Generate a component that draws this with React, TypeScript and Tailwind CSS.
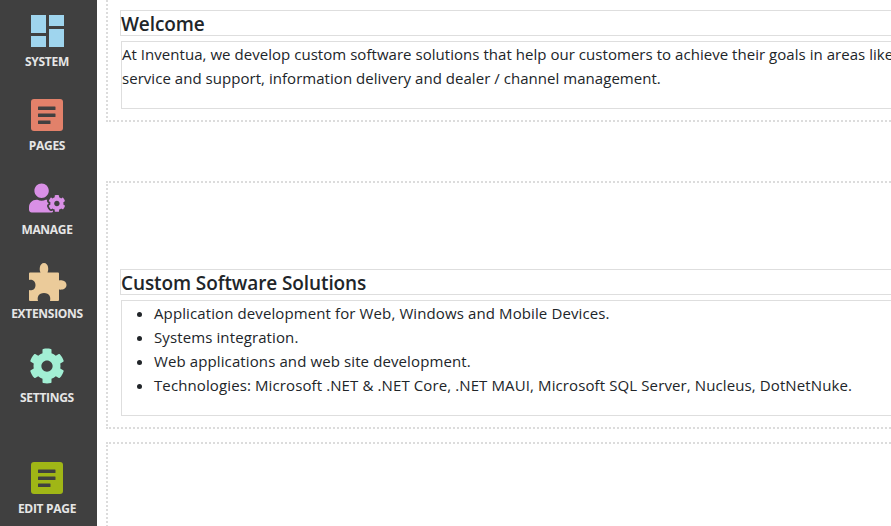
import { FaCog, FaUserCog } from "react-icons/fa";

const labelClass =
  "text-[12px] leading-[16px] font-bold text-[#e6e6e6] tracking-[-0.3px] whitespace-nowrap";

const SystemIcon = () => (
  <svg width="33" height="32" viewBox="0 0 33 32" fill="#9fd5ee">
    <rect x="0" y="0" width="15" height="18" />
    <rect x="18" y="0" width="15" height="11" />
    <rect x="0" y="21" width="15" height="11" />
    <rect x="18" y="14" width="15" height="18" />
  </svg>
);

const PageIcon = ({ color }: { color: string }) => (
  <svg width="32" height="32" viewBox="0 0 32 32">
    <rect width="32" height="32" rx="3" fill={color} />
    <rect x="7" y="7.5" width="17.500" height="3.500" rx="0.5" fill="#404040" />
    <rect x="7" y="14.500" width="17.500" height="3.500" rx="0.5" fill="#404040" />
    <rect x="7" y="21.500" width="12.500" height="3.500" rx="0.5" fill="#404040" />
  </svg>
);

const PuzzleIcon = () => (
  <svg width="38" height="38" viewBox="0 0 38 38" fill="#ebcb9a">
    <path d="M1 9.500H11.500C10 7 10.500 0 15 0S20 7 18.500 9.500H29a1 1 0 0 1 1 1V17.500C32 17 37.500 17.500 37.500 22S32 27 30 26.500V37a1 1 0 0 1-1 1H21C22 34 20.500 30 15 30S8 34 9 38H1a1 1 0 0 1-1-1V27C2 28 6.500 27 6.500 22S2 16 0 17V10.500a1 1 0 0 1 1-1z" />
  </svg>
);

const navItems = [
  { label: "SYSTEM", icon: <SystemIcon />, iconBox: "h-[32px] mt-[15px] mb-[7px]" },
  { label: "PAGES", icon: <PageIcon color="#e2816a" />, iconBox: "h-[32px] mt-[15px] mb-[7px]" },
  { label: "MANAGE", icon: <FaUserCog size={36} color="#d990e6" />, iconBox: "h-[36px] mt-[12px] mb-[6px]" },
  { label: "EXTENSIONS", icon: <PuzzleIcon />, iconBox: "h-[38px] mt-[11px] mb-[5px] ml-[2px]" },
  { label: "SETTINGS", icon: <FaCog size={36} color="#a2efd4" />, iconBox: "h-[36px] mt-[12px] mb-[6px]" },
];

export default function App() {
  return (
    <div
      className="flex h-[526px] w-[891px] overflow-hidden bg-white text-[#212529]"
      style={{ fontFamily: '"Open Sans", "Noto Sans", sans-serif' }}
    >
      <aside className="flex h-full w-[97px] shrink-0 flex-col bg-[#404040] pr-[3px]">
        {navItems.map((item) => (
          <div key={item.label} className="flex h-[84px] flex-col items-center">
            <div className={item.iconBox}>{item.icon}</div>
            <span className={labelClass}>{item.label}</span>
          </div>
        ))}
        <div className="mt-auto flex flex-col items-center pb-[9px]">
          <div className="mb-[7px] h-[32px]">
            <PageIcon color="#a0b616" />
          </div>
          <span className={labelClass}>EDIT PAGE</span>
        </div>
      </aside>

      <main className="min-w-0 flex-1 overflow-hidden pl-[9px]">
        <div className="w-[1000px]">
          <section className="h-[122px] border-b-2 border-l-2 border-dotted border-[#dcdcdc] pl-[12px] pt-[10px]">
            <h2 className="h-[26px] border border-[#dedede] text-[19px] leading-[26px] font-semibold tracking-[-0.1px]">
              Welcome
            </h2>
            <div className="ml-[1px] mt-[5px] h-[68px] border border-[#dedede] text-[15px] leading-[24px] tracking-[0.04px]">
              <p className="whitespace-nowrap">
                At Inventua, we develop custom software solutions that help our customers to achieve their goals in areas like
                <br />
                service and support, information delivery and dealer / channel management.
              </p>
            </div>
          </section>

          <section className="mt-[59px] h-[248px] border-y-2 border-l-2 border-dotted border-[#dcdcdc] pl-[12px] pt-[86px]">
            <h2 className="h-[26px] border border-[#dedede] text-[19px] leading-[26px] font-semibold tracking-[-0.1px]">
              Custom Software Solutions
            </h2>
            <div className="ml-[1px] mt-[5px] h-[116px] border border-[#dedede] text-[15px] leading-[24px] tracking-[0.11px]">
              <ul className="list-disc pl-[32px]">
                <li>Application development for Web, Windows and Mobile Devices.</li>
                <li>Systems integration.</li>
                <li>Web applications and web site development.</li>
                <li>Technologies: Microsoft .NET &amp; .NET Core, .NET MAUI, Microsoft SQL Server, Nucleus, DotNetNuke.</li>
              </ul>
            </div>
          </section>

          <section className="mt-[13px] h-[120px] border-t-2 border-l-2 border-dotted border-[#dcdcdc]" />
        </div>
      </main>
    </div>
  );
}
